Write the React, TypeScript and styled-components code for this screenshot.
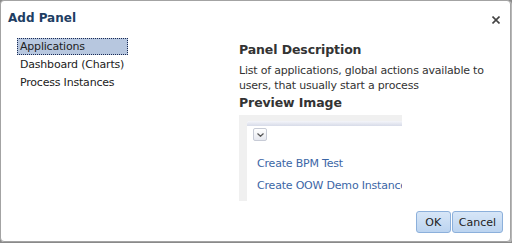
import { FC } from 'react'
import styled, { createGlobalStyle } from 'styled-components'

const GlobalStyle = createGlobalStyle`
    html, body {
        margin: 0;
        padding: 0;
        background: #8a8a8a;
    }
    body {
        font-family: "DejaVu Sans", "Liberation Sans", sans-serif;
        font-size: 11px;
        letter-spacing: -0.2px;
        color: #333;
    }
`

const PANELS = ['Applications', 'Dashboard (Charts)', 'Process Instances']

const App: FC = () => {
    return (
        <>
            <GlobalStyle />
            <Dialog>
                <Header>
                    <Title>Add Panel</Title>
                    <CloseButton aria-label="close">
                        <svg width="8" height="8" viewBox="0 0 8 8">
                            <path d="M0.5 0.5 L7.5 7.5 M7.5 0.5 L0.5 7.5" stroke="#444" strokeWidth="1.6" />
                        </svg>
                    </CloseButton>
                </Header>
                <Body>
                    <PanelList>
                        {PANELS.map((name, i) => (
                            <PanelItem key={name} $selected={i === 0}>{name}</PanelItem>
                        ))}
                    </PanelList>
                    <Details>
                        <SectionTitle>Panel Description</SectionTitle>
                        <Description>
                            List of applications, global actions available to users, that usually start a process
                        </Description>
                        <SectionTitle>Preview Image</SectionTitle>
                        <Preview>
                            <PreviewCard>
                                <PreviewBar />
                                <PreviewContent>
                                    <DropButton>
                                        <svg width="7" height="4" viewBox="0 0 7 4">
                                            <path d="M0.5 0.5 L3.5 3.3 L6.5 0.5" stroke="#555" strokeWidth="1.2" fill="none" />
                                        </svg>
                                    </DropButton>
                                    <PreviewLink>Create BPM Test</PreviewLink>
                                    <PreviewLink>Create OOW Demo Instance</PreviewLink>
                                </PreviewContent>
                            </PreviewCard>
                        </Preview>
                    </Details>
                </Body>
                <Footer>
                    <Button>OK</Button>
                    <Button>Cancel</Button>
                </Footer>
            </Dialog>
        </>
    )
}

const Dialog = styled.div`
    box-sizing: border-box;
    width: 511px;
    height: 242px;
    background: #fff;
    border: 1px solid #a3a3a3;
    border-radius: 4px;
    box-shadow: 1px 1px 0 #b8b8b8;
    display: flex;
    flex-direction: column;
`

const Header = styled.div`
    display: flex;
    justify-content: space-between;
    align-items: center;
    padding: 8px 10px 0 7px;
    height: 18px;
`

const Title = styled.h1`
    margin: 0;
    font-size: 12px;
    font-weight: bold;
    letter-spacing: 0;
    color: #1e3e63;
`

const CloseButton = styled.button`
    border: none;
    background: none;
    padding: 0;
    display: flex;
    margin-top: 4px;
`

const Body = styled.div`
    flex: 1;
    display: flex;
    padding: 11px 0 0 16px;
`

const PanelList = styled.ul`
    list-style: none;
    margin: 0;
    padding: 0;
    width: 222px;
`

const PanelItem = styled.li<{ $selected?: boolean }>`
    box-sizing: border-box;
    width: 111px;
    height: 17px;
    line-height: 15px;
    padding: 0 2px;
    margin-bottom: 1px;
    color: #222;
    white-space: nowrap;
    border: 1px ${p => (p.$selected ? 'dotted #1a2b55' : 'solid transparent')};
    background: ${p => (p.$selected ? '#b7c7df' : 'transparent')};
`

const Details = styled.div`
    display: flex;
    flex-direction: column;
`

const SectionTitle = styled.h2`
    margin: 1px 0 0;
    font-size: 12.5px;
    font-weight: bold;
    letter-spacing: -0.1px;
    color: #333;
    line-height: 17px;
    &:first-child {
        margin-top: 3px;
    }
`

const Description = styled.p`
    margin: 5px 0 0;
    width: 260px;
    line-height: 15px;
    color: #333;
`

const Preview = styled.div`
    margin-top: 4px;
    width: 163px;
    height: 86px;
    background: #f0f0f0;
    padding: 6px 0 0 8px;
    box-sizing: border-box;
    overflow: hidden;
`

const PreviewCard = styled.div`
    background: #fff;
    border-radius: 3px 0 0 0;
    height: 100%;
`

const PreviewBar = styled.div`
    height: 5px;
    border-radius: 3px 0 0 0;
    background: linear-gradient(#f4f5fa, #d7dbe8);
`

const PreviewContent = styled.div`
    padding: 2px 0 0 6px;
`

const DropButton = styled.div`
    width: 12px;
    height: 11px;
    border: 1px solid #c7cbd6;
    border-radius: 2px;
    background: linear-gradient(#fff, #e6e8ef);
    display: flex;
    align-items: center;
    justify-content: center;
    margin-bottom: 12px;
`

const PreviewLink = styled.div`
    color: #3b66a6;
    white-space: nowrap;
    padding-left: 4px;
    line-height: 22px;
`

const Footer = styled.div`
    display: flex;
    justify-content: flex-end;
    gap: 1px;
    padding: 0 7px 8px 0;
`

const Button = styled.button`
    font-family: inherit;
    font-size: 11px;
    color: #222;
    height: 22px;
    padding: 0 6px;
    min-width: 35px;
    border: 1px solid #8cb0db;
    border-radius: 3px;
    background: linear-gradient(#d7e6f7, #bcd4f0);
`

export default App
